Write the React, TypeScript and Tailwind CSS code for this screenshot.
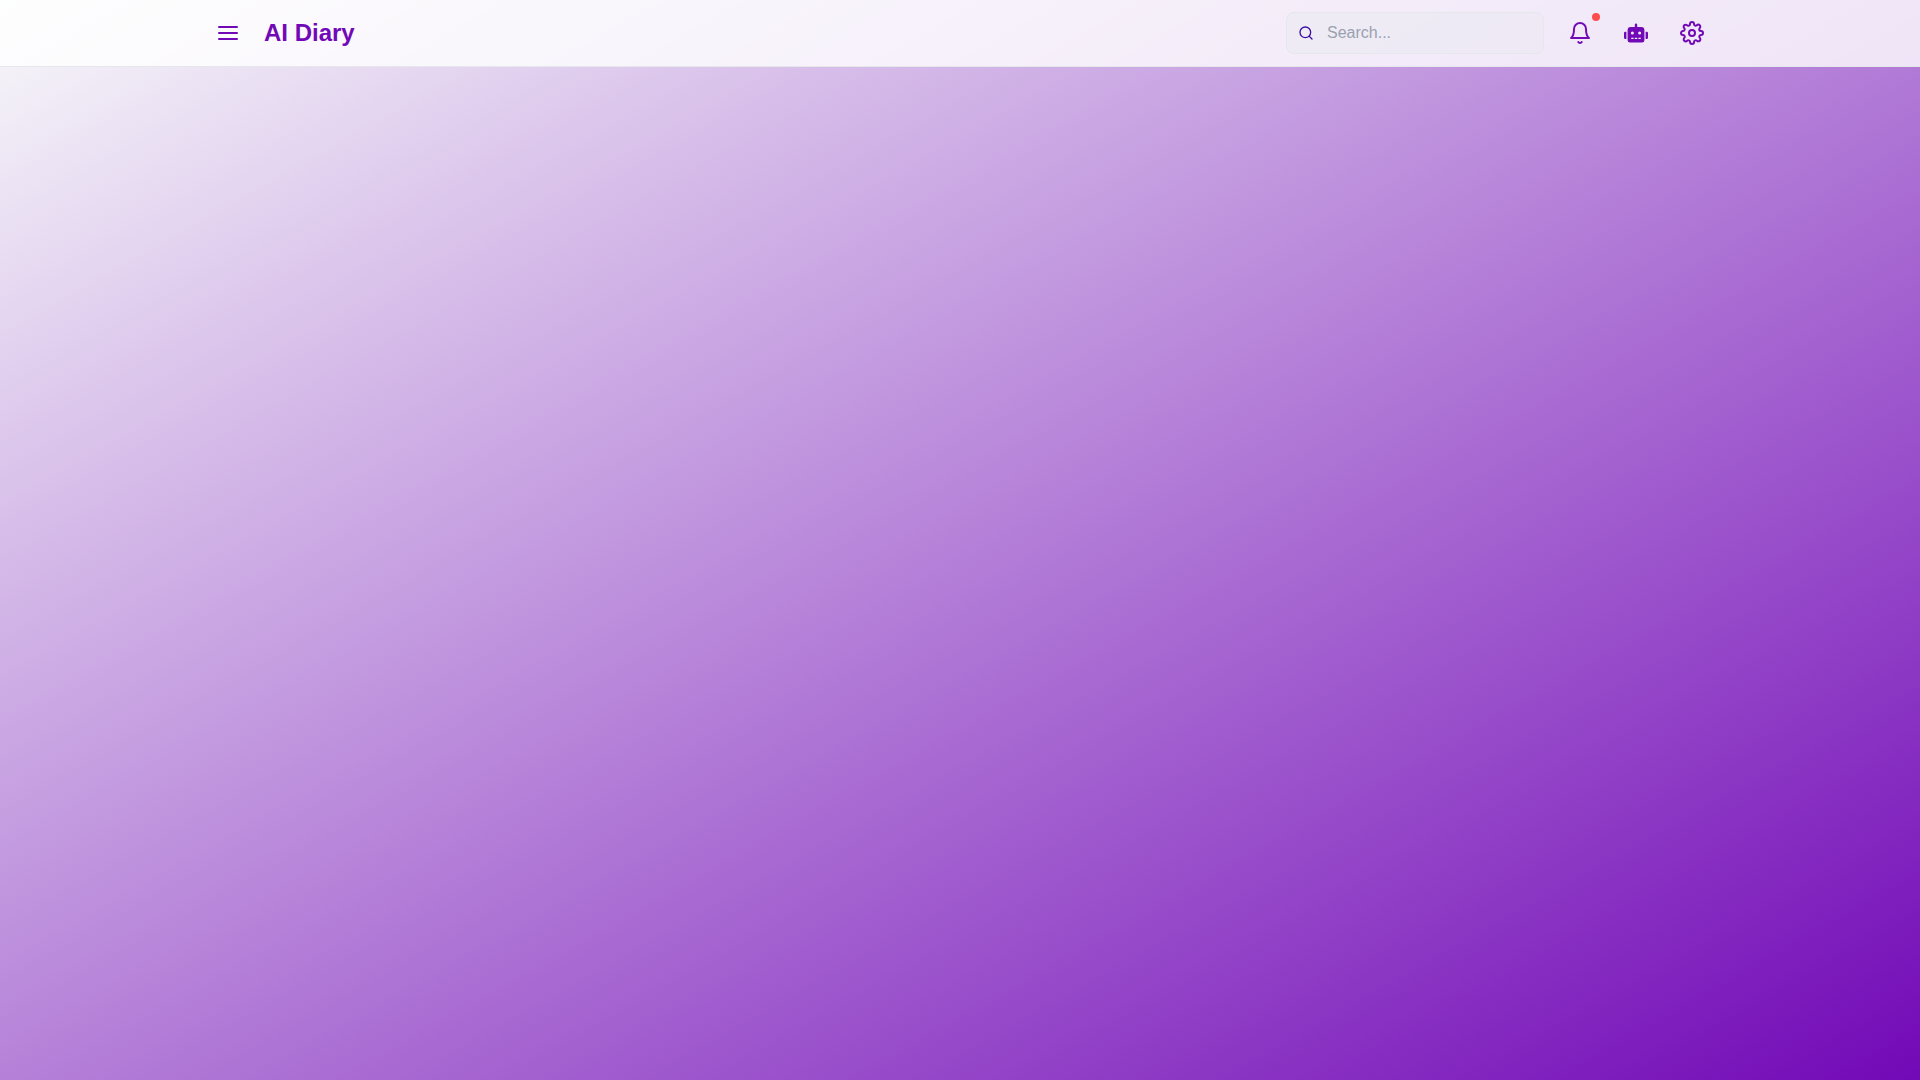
import { FiMenu, FiSearch, FiBell, FiSettings } from 'react-icons/fi';
import { FaRobot } from 'react-icons/fa';

export default function App() {
  return (
    <div
      className="min-h-screen bg-linear-to-br/srgb from-[#f8f9fa] to-[#7209b7]"
      style={{ fontFamily: '"Liberation Sans", Arial, sans-serif' }}
    >
      {/* Top bar */}
      <header className="bg-white/80 border-b border-gray-200">
        <div className="max-w-screen-2xl mx-auto px-4 py-3 flex items-center justify-between">
          <div className="flex items-center gap-4">
            <button className="p-2 rounded-lg text-[#7209b7]">
              <FiMenu className="w-6 h-6" />
            </button>
            <h1 className="text-2xl font-bold text-[#7209b7]">AI Diary</h1>
          </div>

          <div className="flex items-center gap-4">
            <div className="relative w-[258px]">
              <FiSearch className="absolute left-3 top-1/2 -translate-y-1/2 w-4 h-4 text-[#3a0ca3]" />
              <input
                type="text"
                placeholder="Search..."
                className="w-full pl-10 pr-4 py-2 rounded-lg border border-gray-200 bg-gray-200/30 placeholder:text-gray-400 outline-none"
              />
            </div>
            <button className="relative p-2 rounded-full text-[#7209b7]">
              <FiBell className="w-6 h-6" />
              <span className="absolute top-0 right-0 w-2 h-2 rounded-full bg-[#ff4d4d]" />
            </button>
            <button className="p-2 rounded-full text-[#7209b7]">
              <FaRobot className="w-6 h-6" />
            </button>
            <button className="p-2 rounded-full text-[#7209b7]">
              <FiSettings className="w-6 h-6" />
            </button>
          </div>
        </div>
      </header>
    </div>
  );
}
